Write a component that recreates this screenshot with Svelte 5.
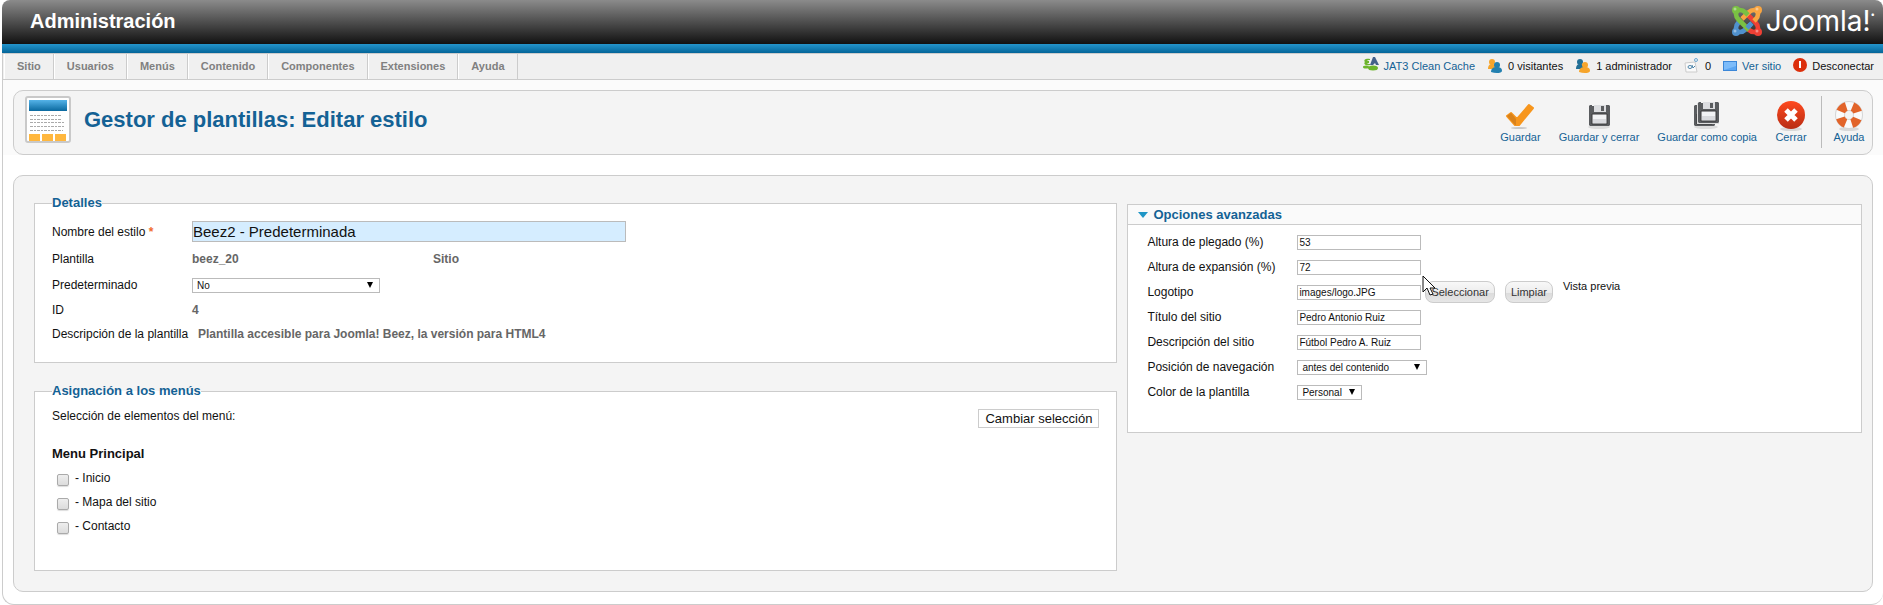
<script>
  const menu = ['Sitio', 'Usuarios', 'Menús', 'Contenido', 'Componentes', 'Extensiones', 'Ayuda'];
  const pages = ['Inicio', 'Mapa del sitio', 'Contacto'];
  const textOptions = [
    { id: 'min', label: 'Altura de plegado (%)', value: '53' },
    { id: 'max', label: 'Altura de expansión (%)', value: '72' },
    { id: 'logo', label: 'Logotipo', value: 'images/logo.JPG', media: true },
    { id: 'title', label: 'Título del sitio', value: 'Pedro Antonio Ruiz' },
    { id: 'desc', label: 'Descripción del sitio', value: 'Fútbol Pedro A. Ruiz' }
  ];
</script>

{#snippet people(front, back)}
  <svg width="16" height="16" viewBox="0 0 16 16" aria-hidden="true">
    <path d="M1 11c0-4 2-5 4-5s4 1 4 5z" fill={back} />
    <circle cx="5" cy="4" r="3" fill={back} />
    <path d="M4 14c0-4 3-5 6-5s5 1 5 4c0 2-6 3-11 1z" fill={front} />
    <circle cx="10" cy="7" r="3" fill={front} />
  </svg>
{/snippet}

{#snippet disk(x, y)}
  <g transform={`translate(${x} ${y})`}>
    <path d="M1 0h2v1h14V0h3l1 1v19l-1 1H1l-1-1V1z" fill="#5a5c5f" />
    <path d="M5 0h12v7H5z" fill="#dcdde0" />
    <path d="M12 1h3v5h-3z" fill="#5a5c5f" />
    <path d="M3 9h15v10H3z" fill="#f2f3f5" stroke="#38393b" />
    <path d="M4 14h13v4H4z" fill="#d9dade" />
  </g>
{/snippet}

<div class="page">
  <header class="top">
    <h1>Administración</h1>
    <div class="logo">
      <svg width="30" height="30" viewBox="0 0 30 30" fill="none" aria-hidden="true">
        <g stroke-width="4.6" stroke-linejoin="round">
          <path d="M4 26h4Q11 26 13.500 23.500L19 18" stroke="#5091cd" />
          <path d="M4 26v-4Q4 19 6.500 16.500L8 15" stroke="#5091cd" />
          <path d="M26 26v-4Q26 19 23.500 16.500L14 7" stroke="#ee4035" />
          <path d="M26 26h-4Q19 26 16.500 23.500L15 22" stroke="#ee4035" />
          <path d="M26 4v4Q26 11 23.500 13.500L22 15" stroke="#f9a541" />
          <path d="M26 4h-4Q19 4 16.500 6.500L10 13" stroke="#f9a541" />
          <path d="M4 4h4Q11 4 13.500 6.500L16 9" stroke="#7ac143" />
          <path d="M4 4v4Q4 11 6.500 13.500L17 24" stroke="#7ac143" />
          <path d="M15 22L20 17" stroke="#5091cd" />
        </g>
        <circle cx="4" cy="4" r="4" fill="#7ac143" />
        <circle cx="26" cy="4" r="4" fill="#f9a541" />
        <circle cx="4" cy="26" r="4" fill="#5091cd" />
        <circle cx="26" cy="26" r="4" fill="#ee4035" />
        <g fill="#fff" opacity=".4">
          <circle cx="3" cy="3" r="1.500" /><circle cx="25" cy="3" r="1.500" /><circle cx="3" cy="25" r="1.500" /><circle cx="25" cy="25" r="1.500" />
        </g>
      </svg>
      <span>Joomla!<sup>•</sup></span>
    </div>
  </header>

  <div class="bar">
    <nav>
      {#each menu as item}<a href="#menu">{item}</a>{/each}
    </nav>
    <div class="status">
      <a href="#cache">
        <svg width="16" height="20" viewBox="0 0 16 20" aria-hidden="true">
          <path d="M7 9l3-8h2l4 8h-3l-1-2-2 2z" fill="#44618a" />
          <path d="M7 3C3 2 0 4 2 6c-2 2 1 4 5 3V8C4 8 3 7 6 7V5C3 5 4 4 7 4z" fill="#6db52c" />
          <ellipse cx="3" cy="11" rx="3" ry="1.500" fill="#6db52c" />
          <ellipse cx="10" cy="12" rx="5" ry="2.500" fill="#6db52c" />
        </svg>JAT3 Clean Cache</a>
      <span>{@render people('#2380b0', '#f6a52c')}0 visitantes</span>
      <span>{@render people('#f6a52c', '#226f96')}1 administrador</span>
      <span>
        <svg width="16" height="16" viewBox="0 0 16 16" aria-hidden="true">
          <path d="M1 5l10-1 2 10H2z" fill="#fafafa" stroke="#ccc" />
          <ellipse cx="6" cy="9" rx="2" ry="1.500" fill="none" stroke="#4f86aa" />
          <path d="M8 7l1 3 2-2" fill="none" stroke="#4f86aa" />
          <circle cx="12" cy="2" r="1.500" fill="none" stroke="#69a7d2" />
        </svg>0</span>
      <a href="#site">
        <svg width="14" height="12" viewBox="0 0 14 12" aria-hidden="true">
          <path d="M0 1h14v10H0z" fill="#3c87d8" />
          <path d="M1 2h12v8H1z" fill="#7dbcfa" />
          <path d="M1 10l12-4v4z" fill="#5ba6f3" />
        </svg>Ver sitio</a>
      <a href="#logout" class="dark">
        <svg width="15" height="18" viewBox="0 0 15 18" aria-hidden="true">
          <circle cx="7" cy="8" r="7" fill="#dc2f0b" />
          <path d="M6 4h2v7H6z" fill="#fff" />
        </svg>Desconectar</a>
    </div>
  </div>

  <div class="frame">
    <div class="head-band">
      <section class="panel titlebar">
        <svg class="page-icon" width="48" height="48" viewBox="0 1 48 48" aria-hidden="true">
          <defs>
            <linearGradient id="band" x2="0" y2="1"><stop stop-color="#55b3e8" /><stop offset="1" stop-color="#0a699f" /></linearGradient>
          </defs>
          <rect x="2" y="2" width="44" height="45" rx="2" fill="#fff" stroke="#c9c9c9" stroke-width="2" />
          <path d="M5 5h38v11H5z" fill="url(#band)" />
          <path d="M6 20.500h32M6 24.500h31M6 27.500h35M6 31.500h34M6 35.500h33" stroke="#aaa" stroke-dasharray="3 1 2 1" />
          <path d="M5 39h11v7H5zM18 39h11v7H18zM31 39h11v7H31z" fill="#ffb73e" />
        </svg>
        <h2>Gestor de plantillas: Editar estilo</h2>
        <div class="tools">
          <a href="#save">
            <svg width="32" height="32" viewBox="0 0 32 32" aria-hidden="true">
              <ellipse cx="15" cy="29" rx="8" ry="1" fill="#c8c8c8" />
              <path d="M3 17l4-3 6 6L25 6l4 3-14 17h-4z" fill="#f7961d" stroke="#f7961d" stroke-width="2" stroke-linejoin="round" />
              <path d="M3 17l4-3 5 6v6h-1z" fill="#d9821b" />
            </svg>Guardar</a>
          <a href="#saveclose">
            <svg width="32" height="32" viewBox="0 0 32 32" aria-hidden="true">
              <ellipse cx="16" cy="28" rx="11" ry="2" fill="#dcdcdc" />
              {@render disk(6, 6)}
            </svg>Guardar y cerrar</a>
          <a href="#copy">
            <svg width="32" height="32" viewBox="0 0 32 32" aria-hidden="true">
              <ellipse cx="15" cy="28" rx="12" ry="2" fill="#dcdcdc" />
              {@render disk(3, 6)}
              <path d="M6 4h22v21H6z" fill="#ddd" />
              {@render disk(7, 3)}
            </svg>Guardar como copia</a>
          <a href="#close">
            <svg width="32" height="32" viewBox="0 0 32 32" aria-hidden="true">
              <defs>
                <linearGradient id="red" x2="0" y2="1"><stop stop-color="#ff4a1f" /><stop offset="1" stop-color="#b82c13" /></linearGradient>
              </defs>
              <ellipse cx="16" cy="30" rx="11" ry="2" fill="#d8d8d8" />
              <circle cx="16" cy="16" r="14" fill="url(#red)" />
              <path d="M11 11l10 10M21 11L11 21" stroke="#fff" stroke-width="5" />
            </svg>Cerrar</a>
          <a href="#help" class="help">
            <svg width="32" height="32" viewBox="0 0 32 32" fill="none" aria-hidden="true">
              <ellipse cx="16" cy="30" rx="10" ry="2" fill="#d8d8d8" />
              <circle cx="16" cy="16" r="9" stroke="#d5d5d5" stroke-width="10" />
              <circle cx="16" cy="16" r="9" stroke="#fafafa" stroke-width="8" />
              <circle cx="16" cy="16" r="9" stroke="#e2642a" stroke-width="9" pathLength="80" stroke-dasharray="11 9" stroke-dashoffset="-5" />
            </svg>Ayuda</a>
        </div>
      </section>
    </div>

    <main class="panel body">
      <form class="left" onsubmit={(e) => e.preventDefault()}>
        <fieldset class="details">
          <legend>Detalles</legend>
          <div class="row tall">
            <label for="name">Nombre del estilo <b class="req">*</b></label>
            <input id="name" class="big" value="Beez2 - Predeterminada" />
          </div>
          <div class="row"><span>Plantilla</span><b class="tpl">beez_20</b><b>Sitio</b></div>
          <div class="row">
            <label for="home">Predeterminado</label>
            <div class="select wide"><select id="home"><option>No</option></select></div>
          </div>
          <div class="row short"><span>ID</span><b>4</b></div>
          <div class="row short"><span>Descripción de la plantilla</span><b class="desc">Plantilla accesible para Joomla! Beez, la versión para HTML4</b></div>
        </fieldset>

        <fieldset class="menus">
          <legend>Asignación a los menús</legend>
          <div class="pick">
            <span>Selección de elementos del menú:</span>
            <button class="toggle" type="button">Cambiar selección</button>
          </div>
          <h3>Menu Principal</h3>
          {#each pages as name, i}
            <div class="check"><input type="checkbox" id={`page${i}`} /><label for={`page${i}`}>- {name}</label></div>
          {/each}
        </fieldset>
      </form>

      <section class="options">
        <h3><svg width="10" height="6" viewBox="0 0 10 6" aria-hidden="true"><path d="M0 0h10L5 6z" fill="#1f96c6" /></svg>Opciones avanzadas</h3>
        <div class="fields">
          {#each textOptions as o}
            <div class="opt">
              <label for={o.id}>{o.label}</label>
              <input id={o.id} value={o.value} />
              {#if o.media}
                <button class="pill first" type="button">Seleccionar</button>
                <button class="pill" type="button">Limpiar</button>
                <a class="preview" href="#preview">Vista previa</a>
                <svg class="pointer" width="14" height="22" viewBox="0 0 14 22" aria-hidden="true">
                  <path d="M1 1v16l4-4 3 7 3-1-3-6h5z" fill="#fff" stroke="#111" />
                </svg>
              {/if}
            </div>
          {/each}
          <div class="opt">
            <label for="nav">Posición de navegación</label>
            <div class="select mid"><select id="nav"><option>antes del contenido</option></select></div>
          </div>
          <div class="opt">
            <label for="color">Color de la plantilla</label>
            <div class="select small"><select id="color"><option>Personal</option></select></div>
          </div>
        </div>
      </section>
    </main>
  </div>
</div>

<style>
  :global(body) { background: #fff; }
  .page {
    padding: 0 0 0 2px;
    font: 12px/16px "Liberation Sans", Arial, sans-serif;
    color: #111;
  }
  .page * { box-sizing: border-box; }
  h1, h2, h3 { margin: 0; }
  a { color: #146295; text-decoration: none; }
  svg { flex: none; }

  .top {
    display: flex;
    align-items: center;
    justify-content: space-between;
    height: 53px;
    padding: 0 8px 12px 28px;
    background:
      linear-gradient(#2394cb, #046599) 0 100% / 100% 9px no-repeat,
      linear-gradient(#8b8b8b, #111 44px);
    border-radius: 8px 8px 0 0;
    color: #fff;
  }
  h1 { font-size: 20px; line-height: 24px; }
  .logo { display: flex; align-items: center; gap: 4px; }
  .logo span { display: flex; font: 400 28px/30px Inter, "DejaVu Sans", sans-serif; }
  .logo sup { font-size: 8px; line-height: 16px; }

  .bar {
    display: flex;
    justify-content: space-between;
    height: 27px;
    border: 1px solid #ccc;
    border-right: 0;
    background: #f0f0f0;
    font-size: 11px;
  }
  nav { display: flex; padding-left: 1px; }
  nav a {
    padding: 0 12px;
    border-left: 1px solid #fff;
    border-right: 1px solid #ccc;
    color: #808080;
    font-weight: bold;
    line-height: 24px;
  }
  .status { display: flex; gap: 12px; padding: 0 9px 2px 0; }
  .status > * { display: flex; align-items: center; gap: 5px; }
  .status .dark { color: #111; gap: 4px; }

  .frame {
    padding-bottom: 12px;
    border: 1px solid #ccc;
    border-width: 0 0 1px 1px;
    border-radius: 0 0 12px 12px;
  }
  .head-band { padding: 10px 10px 0; background: #fbfbfb; }
  .panel { border: 1px solid #ccc; border-radius: 10px; background: #f4f4f4; }
  .titlebar { display: flex; height: 65px; padding: 5px 7px 0 10px; }
  h2 { flex: 1; padding: 11px 0 0 12px; color: #146295; font-size: 22px; line-height: 26px; }
  .tools { display: flex; gap: 18px; font-size: 11px; line-height: 12px; }
  .tools a { display: flex; flex-direction: column; align-items: center; padding-top: 3px; height: 52px; }
  .tools .help { margin-left: -4px; padding-left: 11px; border-left: 1px solid #bbb; }

  .body {
    display: grid;
    grid-template-columns: minmax(0, 1084fr) minmax(0, 735fr);
    gap: 10px;
    align-items: start;
    margin: 20px 10px 0;
    padding: 19px 10px 20px 20px;
  }
  fieldset { margin: 0; padding: 0 17px; border: 1px solid #ccc; background: #fff; }
  legend { padding: 0; color: #146295; font-size: 13px; font-weight: bold; line-height: 16px; }
  .details { height: 168px; }
  .menus { height: 188px; margin-top: 20px; }
  .row { display: flex; align-items: center; height: 26px; }
  .row.tall { height: 29px; margin-top: 6px; }
  .row.short { height: 24px; }
  .row > :first-child { flex: none; min-width: 140px; }
  .row b { color: #666; }
  .row .req { color: #f16b2c; }
  .row .desc { padding-left: 6px; }
  .tpl { width: 241px; }
  input:not([type="checkbox"]), select {
    height: 15px;
    margin: 0;
    padding: 0 1px;
    border: 1px solid #bbb;
    border-radius: 0;
    background: #fff;
    color: #111;
    font: 10px/13px "Liberation Sans", Arial, sans-serif;
    outline: 0;
  }
  input.big:not([type="checkbox"]) { width: 434px; height: 21px; padding: 0; background: #d5edff; font-size: 15px; }
  .select { position: relative; display: flex; }
  .select::after {
    content: "";
    position: absolute;
    right: 7px;
    top: 4px;
    border: solid transparent;
    border-width: 6px 3px 0;
    border-top-color: #000;
    pointer-events: none;
  }
  select { width: 100%; padding: 0 4px; appearance: none; }
  .wide { width: 188px; }
  .mid { width: 130px; }
  .small { width: 65px; }

  .pick { display: flex; justify-content: space-between; padding-top: 9px; }
  .toggle {
    height: 19px;
    margin-top: 1px;
    padding: 0 6px;
    border: 1px solid #ccc;
    background: #fff;
    color: #111;
    font: 13px/16px "Liberation Sans", Arial, sans-serif;
  }
  .menus h3 { margin: 18px 0 8px; font-size: 13px; line-height: 16px; }
  .check { display: flex; height: 24px; gap: 6px; padding-left: 5px; }
  .check input {
    appearance: none;
    width: 12px;
    height: 12px;
    margin: 4px 0 0;
    border: 1px solid #aaa;
    border-radius: 2px;
    background: linear-gradient(#eee, #dcdcdc);
    box-shadow: 0 1px 1px #ddd;
  }

  .options { margin-top: 9px; height: 229px; border: 1px solid #ccc; background: #fff; }
  .options h3 {
    display: flex;
    align-items: center;
    gap: 5px;
    height: 20px;
    padding-left: 10px;
    border-bottom: 1px solid #ccc;
    background: #fafafa;
    color: #146295;
    font-size: 13px;
    line-height: 16px;
  }
  .fields { padding: 5px 0 0 19px; }
  .opt { position: relative; display: flex; align-items: center; height: 25px; }
  .opt > label { width: 150px; padding-bottom: 2px; }
  .opt > input:not([type="checkbox"]) { width: 124px; }
  .pill {
    height: 22px;
    margin: 0 10px 2px 0;
    padding: 0 5px;
    border: 1px solid #ccc;
    border-radius: 8px;
    background: linear-gradient(#f8f8f8, #ececec 55%, #dcdcdc 56%, #e6e6e6);
    color: #333;
    font: 11px/16px "Liberation Sans", Arial, sans-serif;
  }
  .pill.first { margin-left: 4px; }
  .preview { align-self: flex-start; color: #111; font-size: 11px; line-height: 12px; }
  .pointer { position: absolute; left: 275px; top: -5px; }
</style>
